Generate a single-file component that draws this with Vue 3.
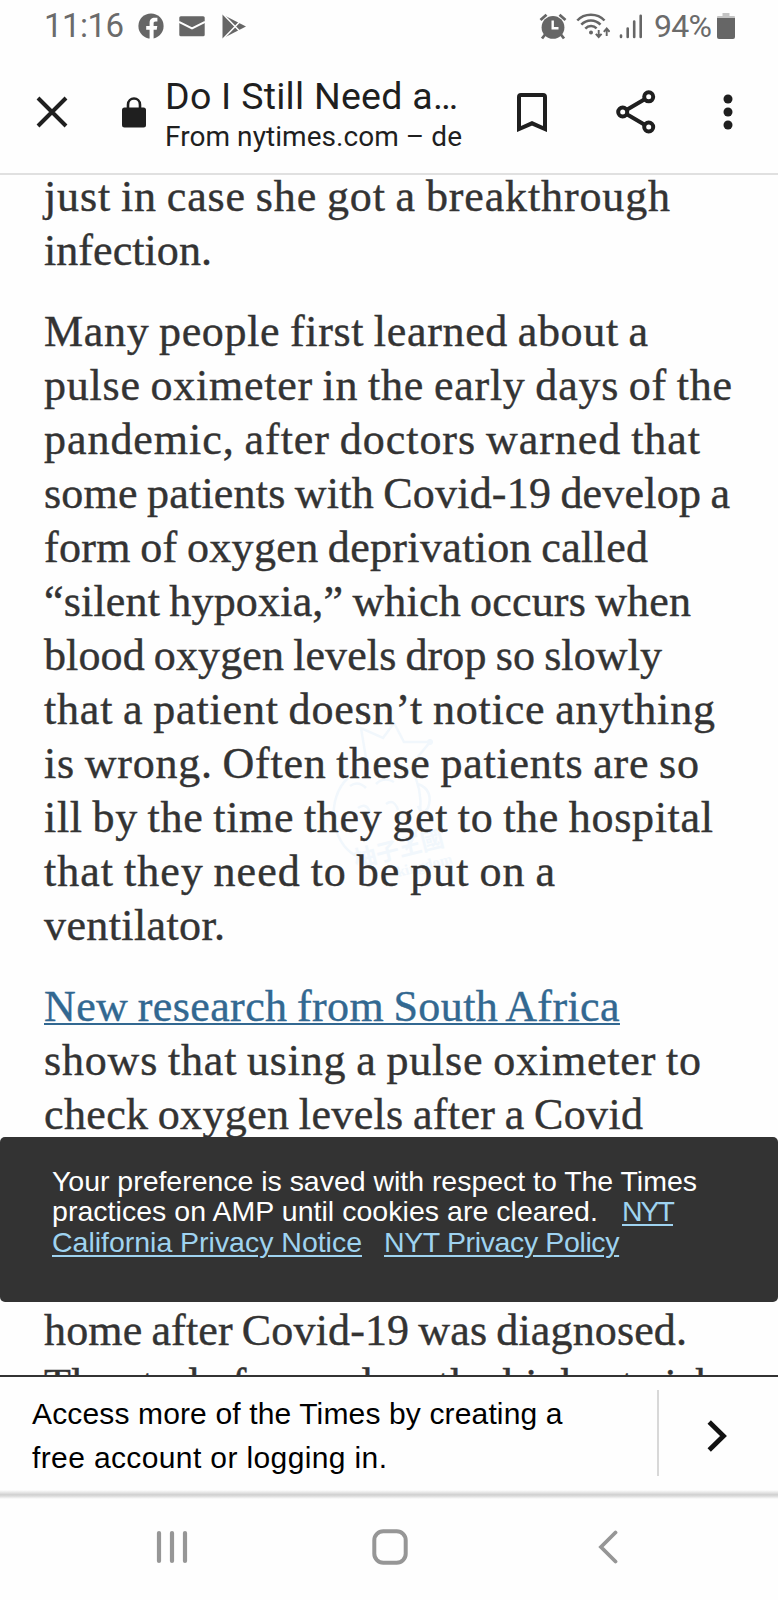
<template>
  <div class="screen">
    <div class="status">
      <span class="clock" :style="fit('11:16', roboto(33), 80)">11:16</span>
      <svg class="fb" width="26" height="26" viewBox="0 0 26 26">
        <circle cx="13" cy="13" r="12.6" fill="#666" />
        <path d="M11.6 26V16.8H8.2V12.9H11.6V10C11.6 6.4 13.6 4.8 16.8 4.8H19.4V8.6H17.6C16 8.6 15.6 9.4 15.6 10.6V12.9H19.3L18.7 16.8H15.6V26Z" fill="#fff" />
      </svg>
      <svg class="mail" width="26" height="21" viewBox="0 0 26 21">
        <rect x="0.3" y="0.3" width="25.4" height="20" rx="1.5" fill="#666" />
        <path d="M0 6L13 12.3L26 6" fill="none" stroke="#fff" stroke-width="2" />
      </svg>
      <svg class="play" width="24" height="25" viewBox="0 0 24 25">
        <path d="M0.5 0.5L24 12.5L0.5 24.5Z" fill="#666" />
        <path d="M1 0L18.5 18M1 25L18.5 7" stroke="#fff" stroke-width="1.5" fill="none" />
      </svg>
      <span class="grow"></span>
      <svg class="alarm" width="28" height="27" viewBox="0 0 28 27">
        <path d="M1.5 7L7.5 1.7M26.5 7L20.5 1.7M6.5 21L3 25.5M21.5 21L25 25.5" stroke="#666" stroke-width="2.8" fill="none" />
        <circle cx="14" cy="14.4" r="11.4" fill="#666" />
        <path d="M13.7 7.5V15.2H19.5" stroke="#fff" stroke-width="2.4" fill="none" />
      </svg>
      <svg class="wifi" width="34" height="26" viewBox="0 0 34 26" fill="none" stroke="#666">
        <path d="M1.3 7.5C8.3-.2 21.5-.2 28.5 7.5M5.3 11.6C10.5 6 19.3 6 24.5 11.6M9.3 15.7C12.5 12.2 17.5 12.2 20.6 15.3" stroke-width="2.5" />
        <circle cx="15" cy="19.5" r="2" fill="#666" stroke="none" />
        <path d="M22.7 17V24M19.8 20.8L22.7 24L25.6 20.8M30.7 23V15.5M27.8 18.8L30.7 15.5L33.6 18.8" stroke-width="1.9" />
      </svg>
      <svg class="signal" width="24" height="25" viewBox="0 0 24 25" stroke="#666" stroke-width="2.6" stroke-linecap="round">
        <path d="M2 21.5V23M8.7 14.5V23M15.2 7.5V23M21.7 1.8V23" />
      </svg>
      <span class="percent" :style="fit('94%', roboto(32), 58)">94%</span>
      <svg class="battery" width="18" height="26" viewBox="0 0 18 26">
        <path d="M5.5 0H12.5V3H17Q18 3 18 4V7H0V4Q0 3 1 3H5.5Z" fill="#c4c4c4" />
        <path d="M0 5H18V24Q18 26 16 26H2Q0 26 0 24Z" fill="#666" />
      </svg>
    </div>

    <header class="toolbar">
      <svg class="close" width="32" height="32" viewBox="0 0 32 32">
        <path d="M2 2L30 30M30 2L2 30" stroke="#1f1f1f" stroke-width="4" />
      </svg>
      <svg class="lock" width="24" height="31" viewBox="0 0 24 31">
        <rect x="0" y="10.5" width="24" height="20" rx="2.5" fill="#1f1f1f" />
        <path d="M6 12V7.7C6 -0.5 18 -0.5 18 7.7V12" fill="none" stroke="#1f1f1f" stroke-width="2.6" />
      </svg>
      <div class="titles">
        <div class="title" :style="fit(title, roboto(37.5), 293)">{{ title }}</div>
        <div class="origin" :style="fit(origin, roboto(28), 297)">{{ origin }}</div>
      </div>
      <svg class="bookmark" width="30" height="39" viewBox="0 0 30 39">
        <path d="M2 36V4Q2 2 4 2H26Q28 2 28 4V36L15 30.3Z" fill="none" stroke="#1f1f1f" stroke-width="4" />
      </svg>
      <svg class="share" width="40" height="44" viewBox="0 0 40 44" fill="none" stroke="#1f1f1f" stroke-width="4">
        <path d="M7 22L32.5 7M7 22L32.5 37" />
        <g fill="#fff">
          <circle cx="6.7" cy="22" r="4.5" />
          <circle cx="32.7" cy="6.8" r="4.5" />
          <circle cx="32.7" cy="37" r="4.5" />
        </g>
      </svg>
      <svg class="more" width="10" height="36" viewBox="0 0 10 36" fill="#1f1f1f">
        <circle cx="5" cy="5" r="4.5" />
        <circle cx="5" cy="18" r="4.5" />
        <circle cx="5" cy="31" r="4.5" />
      </svg>
    </header>

    <main class="article">
      <svg class="watermark" width="130" height="170" viewBox="0 0 130 170">
        <g fill="none" stroke="#f1f7fc" stroke-width="2.5">
          <path d="M39 44L33 8L55 18L66 3L76 22L102 22L84 44" />
          <path d="M20 58C-2 78 2 122 28 136M84 50C98 76 94 110 78 130" />
          <path d="M22 66Q30 60 38 68M48 64Q56 56 66 62M30 88Q38 82 42 92M58 84Q66 78 70 90" />
          <path d="M90 64Q106 70 100 88Q94 96 90 86" />
        </g>
        <circle cx="102" cy="22" r="3" fill="#f1f7fc" />
        <text x="28" y="148" class="mark-name" transform="rotate(-14 28 148)">柚子王國</text>
        <text x="70" y="157" class="mark-sub" transform="rotate(-14 70 157)">kingdom</text>
      </svg>
      <p v-for="(lines, i) in paragraphs" :key="i">
        <span
          v-for="(line, j) in lines"
          :key="j"
          class="line"
        ><a v-if="line.link" href="#" :style="fit(line.text, serif, line.width, -2)">{{ line.text }}</a><span v-else :style="fit(line.text, serif, line.width, -2)">{{ line.text }}</span></span>
      </p>
      <p class="continued">
        <span v-for="line in continued" :key="line.text" class="line" :style="fit(line.text, serif, line.width, -2)">{{ line.text }}</span>
      </p>
    </main>

    <div class="notice">
      <div :style="fit(notice[0], sans(28.5), 646)">{{ notice[0] }}</div>
      <div class="notice-row">
        <span class="cleared" :style="fit(notice[1], sans(28.5), 548)">{{ notice[1] }}</span>
        <a href="#" :style="fit('NYT', sans(28.5), 53)">NYT</a>
      </div>
      <div class="notice-row">
        <a class="california" href="#" :style="fit('California Privacy Notice', sans(28.5), 310)">California Privacy Notice</a>
        <a href="#" :style="fit('NYT Privacy Policy', sans(28.5), 236)">NYT Privacy Policy</a>
      </div>
    </div>

    <section class="account">
      <div class="account-text">
        <div v-for="line in account" :key="line.text" :style="fit(line.text, sans(30), line.width)">{{ line.text }}</div>
      </div>
      <div class="account-go">
        <svg width="20" height="32" viewBox="0 0 20 32">
          <path d="M2.2 2L16.5 16L2.2 30" fill="none" stroke="#121212" stroke-width="4.8" />
        </svg>
      </div>
    </section>
    <div class="edge"></div>

    <nav class="system">
      <svg width="32" height="34" viewBox="0 0 32 34" stroke="#969696" stroke-width="4.2" stroke-linecap="round">
        <path d="M3 3V31M16 3V31M29 3V31" />
      </svg>
      <svg class="home" width="36" height="36" viewBox="0 0 36 36">
        <rect x="2.3" y="2.3" width="31.4" height="31.4" rx="9" fill="none" stroke="#969696" stroke-width="4" />
      </svg>
      <svg class="back" width="20" height="34" viewBox="0 0 20 34">
        <path d="M17.5 2.5L3 17L17.5 31.5" fill="none" stroke="#969696" stroke-width="3.8" stroke-linecap="round" />
      </svg>
    </nav>
  </div>
</template>

<script setup>
const serif = '44px "Liberation Serif"';
const sans = (size) => `${size}px "Liberation Sans"`;
const roboto = (size) => `${size}px Roboto`;

const ctx = document.createElement('canvas').getContext('2d');

// Tracks a line of text so that it ends at the given width
function fit(text, font, width, wordSpacing = 0) {
  ctx.font = font;
  const spaces = text.split(' ').length - 1;
  const natural = ctx.measureText(text).width + spaces * wordSpacing;
  const spacing = (width - natural) / (text.length - 1);
  return { letterSpacing: spacing.toFixed(3) + 'px', wordSpacing: wordSpacing + 'px' };
}

const title = 'Do I Still Need a…';
const origin = 'From nytimes.com – de';

const paragraphs = [
  [
    { text: 'just in case she got a breakthrough', width: 626 },
    { text: 'infection.', width: 168 },
  ],
  [
    { text: 'Many people first learned about a', width: 604 },
    { text: 'pulse oximeter in the early days of the', width: 688 },
    { text: 'pandemic, after doctors warned that', width: 656 },
    { text: 'some patients with Covid-19 develop a', width: 686 },
    { text: 'form of oxygen deprivation called', width: 604 },
    { text: '“silent hypoxia,” which occurs when', width: 647 },
    { text: 'blood oxygen levels drop so slowly', width: 618 },
    { text: 'that a patient doesn’t notice anything', width: 671 },
    { text: 'is wrong. Often these patients are so', width: 655 },
    { text: 'ill by the time they get to the hospital', width: 669 },
    { text: 'that they need to be put on a', width: 511 },
    { text: 'ventilator.', width: 181 },
  ],
  [
    { text: 'New research from South Africa', width: 578, link: true },
    { text: 'shows that using a pulse oximeter to', width: 657 },
    { text: 'check oxygen levels after a Covid', width: 599 },
  ],
];

const continued = [
  { text: 'home after Covid-19 was diagnosed.', width: 643 },
  { text: 'The study focused on the highest-risk', width: 673 },
];

const notice = [
  'Your preference is saved with respect to The Times',
  'practices on AMP until cookies are cleared.',
];

const account = [
  { text: 'Access more of the Times by creating a', width: 531 },
  { text: 'free account or logging in.', width: 355 },
];
</script>

<style>
body {
  background: #fefefe;
}
</style>

<style scoped>
.screen {
  position: relative;
  display: flex;
  flex-direction: column;
  width: 778px;
  height: 1600px;
  overflow: hidden;
  background: #fefefe;
}

svg {
  display: block;
  flex: none;
}

.status {
  display: flex;
  align-items: center;
  box-sizing: border-box;
  height: 52px;
  padding: 0 43px 0 44px;
  font: 33px/54px Roboto, sans-serif;
  color: #6b6b6b;
}
.clock {
  width: 94px;
}
.mail {
  margin-left: 15px;
}
.play {
  margin-left: 17px;
}
.grow {
  flex: 1;
}
.wifi {
  margin-left: 9px;
}
.signal {
  margin-left: 9px;
}
.percent {
  width: 63px;
  margin-left: 11px;
  font-size: 32px;
}

.toolbar {
  display: flex;
  align-items: center;
  box-sizing: border-box;
  height: 123px;
  padding: 0 45px 1px 36px;
  border-bottom: 2px solid #e0e0e0;
  color: #1f1f1f;
  font-family: Roboto, sans-serif;
  white-space: nowrap;
}
.lock {
  margin-left: 54px;
}
.titles {
  width: 352px;
  margin: 6px 0 0 19px;
}
.title {
  font-size: 37.5px;
  line-height: 42px;
}
.origin {
  margin-top: 2px;
  font-size: 28px;
  line-height: 36px;
}
.share {
  margin-left: 69px;
}
.more {
  margin-left: auto;
}

.article {
  position: relative;
  box-sizing: border-box;
  flex: none;
  height: 1200px;
  padding-left: 44px;
  overflow: hidden;
  color: #333;
  font: 44px/54.08px "Liberation Serif", serif;
  -webkit-text-stroke: 0.4px;
  white-space: nowrap;
}
.article p {
  position: relative;
  margin: 0 0 26.4px;
}
.article p:first-of-type {
  margin-top: -5px;
}
.article .continued {
  margin: 162.2px 0 0;
}
.line {
  display: block;
}
.article a {
  color: #326891;
  text-decoration: underline;
  text-decoration-thickness: 2px;
  text-underline-offset: 2px;
  text-decoration-skip-ink: none;
}
.watermark {
  position: absolute;
  left: 328px;
  top: 545px;
  -webkit-text-stroke: 0;
}
.mark-name {
  fill: #f1f7fc;
  font: bold 23px "Noto Sans CJK TC", sans-serif;
}
.mark-sub {
  fill: #f1f7fc;
  font: bold 15px "Liberation Serif", serif;
}

.notice {
  position: absolute;
  left: 0;
  top: 1137px;
  box-sizing: border-box;
  width: 778px;
  height: 165px;
  padding: 29px 0 0 52px;
  border-radius: 5px;
  background: #333;
  color: #fff;
  font: 28.5px/30.3px "Liberation Sans", sans-serif;
  white-space: nowrap;
}
.notice-row {
  display: flex;
}
.cleared {
  width: 570px;
}
.california {
  margin-right: 22px;
}
.notice a {
  color: #9fd3f0;
  text-decoration: underline;
  text-decoration-thickness: 2px;
  text-underline-offset: 3px;
}

.account {
  display: flex;
  align-items: center;
  box-sizing: border-box;
  height: 115px;
  padding-top: 4px;
  border-top: 2px solid #333;
  color: #000;
  white-space: nowrap;
}
.account-text {
  box-sizing: border-box;
  width: 657px;
  padding-left: 32px;
  font: 30px/43.3px "Liberation Sans", sans-serif;
}
.account-go {
  display: flex;
  align-items: center;
  box-sizing: border-box;
  height: 86px;
  margin-bottom: 6px;
  padding: 7px 0 0 48px;
  border-left: 2px solid #d8d8d8;
}
.edge {
  height: 9px;
  background: linear-gradient(#fefefe, #d2d2d2 50%, #d8d8d8 65%, #fefefe);
}

.system {
  display: flex;
  align-items: center;
  height: 96px;
  padding-left: 156px;
}
.home {
  margin-left: 184px;
}
.back {
  margin-left: 190px;
}
</style>
